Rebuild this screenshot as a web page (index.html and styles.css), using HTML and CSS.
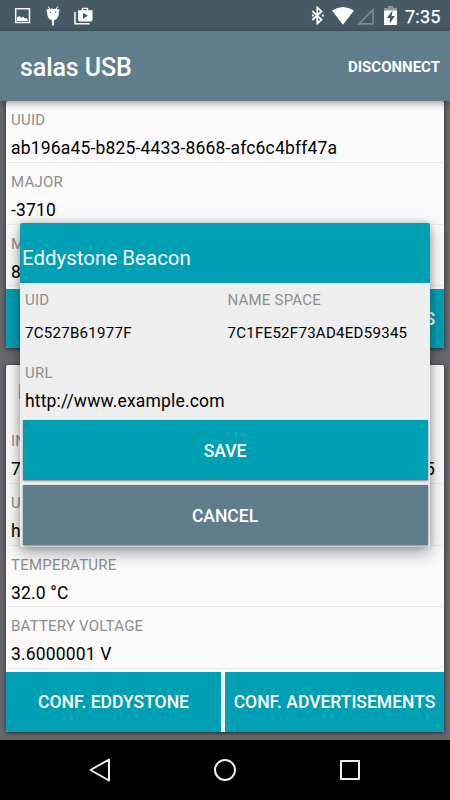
FILE: index.html
```html
<!DOCTYPE html>
<html lang="en">
<head>
<meta charset="utf-8">
<title>salas USB</title>
<link rel="stylesheet" href="styles.css">
</head>
<body>
<div class="screen">
  <header class="status">
    <div class="notices">
      <svg class="i-image" width="16" height="16" viewBox="0 0 16 16"><rect x=".7" y=".7" width="13.800" height="13.800" fill="none" stroke="#fff" stroke-width="1.400"/><path fill="#fff" d="M2 13V9.500l2.600-1.500 1.700 1.800 2-1 1.300 1.500 2.400.2 1.200 2.500z"/></svg>
      <svg class="i-droid" width="14" height="20" viewBox="0 0 14 20"><path d="M2.200 .5l2 3M11.800 .5l-2 3" stroke="#fff" stroke-width="1"/><path fill="#fff" d="M3.300 2.700h7.400c1.600.4 2.200 1 2.900.7-.1 1.500-.8 2.200-.8 3.600 0 4.300-2.400 7.400-5.800 7.400S1.200 11.300 1.200 7C1.200 5.500.5 4.900.4 3.400c.7.3 1.400-.3 2.900-.7z"/><path fill="#fff" d="M6.100 14h1.800v5.500H6.100z"/><circle cx="4.400" cy="6.200" r=".8" fill="#455a64"/><circle cx="9.600" cy="6.200" r=".8" fill="#455a64"/></svg>
      <svg class="i-store" width="19" height="18" viewBox="0 0 19 18"><path d="M1 5v11.800h14.500" fill="none" stroke="#fff" stroke-width="1.500"/><path fill="#fff" fill-rule="evenodd" d="M4 3.200h3.700V1.800Q7.700.8 8.700.8h4.600q1 0 1 1v1.400H18.500v9.300q0 2-2 2H6q-2 0-2-2zM9 2.200v1h4v-1zM9 5.800v6l4.800-3z"/></svg>
    </div>
    <div class="system">
      <svg class="i-bt" width="13" height="19" viewBox="0 0 13 19"><path d="M1.300 5l9.200 8.700L6.300 17.400V1.500l4.200 3.900L1.300 14" fill="none" stroke="#fff" stroke-width="1.800"/><path d="M1 8.600h2v1.800H1zM10.800 8.600h2v1.800h-2z" fill="#fff"/></svg>
      <svg class="i-wifi" width="22" height="18" viewBox="0 0 22 18"><path fill="#fff" d="M0 3.500Q11-3.500 22 3.500L11 17.700z"/></svg>
      <svg class="i-cell" width="17" height="17" viewBox="0 0 17 17"><path d="M1.800 15.900H16V1.800z" fill="none" stroke="#7c8b92" stroke-width="1.600"/></svg>
      <svg class="i-batt" width="13" height="19" viewBox="0 0 13 19"><path fill="#8b989e" d="M4 0h5v2h4v3H0V2h4z"/><path fill="#fff" d="M0 4.500h13V19H0z"/><path fill="#455a64" d="M8.500 4.500L2.800 12h3v5.500l5-7.500H7.700z"/></svg>
      <span class="clock">7:35</span>
    </div>
  </header>
  <div class="appbar"><h1>salas USB</h1><span class="action">DISCONNECT</span></div>
  <main class="content">
    <section class="card card-top">
      <div class="row"><div class="label">UUID</div><div class="value">ab196a45-b825-4433-8668-afc6c4bff47a</div></div>
      <div class="row"><div class="label">MAJOR</div><div class="value">-3710</div></div>
      <div class="row"><div class="label">MINOR</div><div class="value">8</div></div>
      <div class="buttons"><div class="btn wide">CONF. ADVERTISEMENTS</div></div>
    </section>
    <section class="card card-eddy">
      <div class="card-title">Eddystone</div>
      <div class="row"><div class="label">INSTANCE</div><div class="value split"><span>7C527B61977F</span><span>7C1FE52F73AD4ED59345</span></div></div>
      <div class="row"><div class="label">URL</div><div class="value">http://www.example.com</div></div>
      <div class="row"><div class="label">TEMPERATURE</div><div class="value">32.0 °C</div></div>
      <div class="row"><div class="label">BATTERY VOLTAGE</div><div class="value">3.6000001 V</div></div>
      <div class="buttons"><div class="btn">CONF. EDDYSTONE</div><div class="btn">CONF. ADVERTISEMENTS</div></div>
    </section>
  </main>
  <nav class="nav">
    <svg width="24" height="26" viewBox="0 0 24 26"><path d="M21 2.500v21L2.500 13z" fill="none" stroke="#eee" stroke-width="2" stroke-linejoin="round"/></svg>
    <svg width="24" height="24" viewBox="0 0 24 24"><circle cx="12" cy="12" r="10" fill="none" stroke="#eee" stroke-width="2"/></svg>
    <svg width="24" height="24" viewBox="0 0 24 24"><rect x="3" y="3" width="18" height="18" fill="none" stroke="#eee" stroke-width="2" stroke-linejoin="round"/></svg>
  </nav>
  <div class="dialog">
    <div class="dialog-title">Eddystone Beacon</div>
    <div class="fields">
      <div><div class="label">UID</div><div class="code">7C527B61977F</div></div>
      <div><div class="label">NAME SPACE</div><div class="code">7C1FE52F73AD4ED59345</div></div>
    </div>
    <div class="url"><div class="label">URL</div><div class="value">http://www.example.com</div></div>
    <div class="dialog-actions"><div class="btn save">SAVE</div><div class="btn cancel">CANCEL</div></div>
  </div>
</div>
</body>
</html>
```
FILE: styles.css
```css
* { box-sizing: border-box; }
body { margin: 0; font-family: Roboto, "Liberation Sans", sans-serif; }
svg { display: block; }
.screen { position: relative; width: 450px; height: 800px; overflow: hidden; display: flex; flex-direction: column; background: #66666c; }
.status { flex: none; height: 31px; background: #455a64; display: flex; justify-content: space-between; padding: 0 10px 0 15px; }
.notices, .system { display: flex; align-items: flex-start; }
.i-image { margin-top: 8px; }
.i-droid { margin: 6px 0 0 15px; }
.i-store { margin: 7px 0 0 14px; }
.i-bt { margin: 6px 8px 0 0; }
.i-wifi { margin: 7px 3px 0 0; }
.i-cell { margin: 8px 10px 0 0; }
.i-batt { margin: 6px 8px 0 0; }
.clock { width: 35px; color: #fff; font-size: 18px; line-height: 33px; letter-spacing: .2px; -webkit-text-stroke: .25px #fff; }
.appbar { flex: none; z-index: 1; height: 70px; padding: 2px 10px 0 20px; display: flex; align-items: center; justify-content: space-between; background: #607d8b; color: #fff; box-shadow: 0 2px 7px rgba(0,0,0,.4); }
h1 { margin: 0; font-size: 25px; font-weight: 500; letter-spacing: -.1px; }
.action { font-size: 15px; font-weight: 700; }
.content { flex: 1; padding: 0 6px; overflow: hidden; }
.card { background: #fafafa; border-radius: 2px; box-shadow: 0 1px 4px rgba(0,0,0,.6); overflow: hidden; }
.card-top { height: 247px; margin-bottom: 17px; }
.card-eddy { height: 367px; }
.row { height: 61.8px; margin: 0 1px 0 2px; padding: 9px 3px 0; border-bottom: 1px solid #e9e9e9; }
.label { color: #8e8e8e; font-size: 15px; line-height: 20px; letter-spacing: .22px; }
.value { color: #000; font-size: 17.500px; line-height: 24px; padding-top: 6px; white-space: nowrap; letter-spacing: .17px; }
.split { display: flex; justify-content: space-between; padding-right: 5px; }
.card-title { height: 57px; padding: 15px 12px 0; font-size: 20px; }
.buttons { display: flex; gap: 4px; height: 60px; margin-top: 2.500px; }
.btn { flex: 1 1 0; display: flex; align-items: center; justify-content: center; height: 60px; padding-top: 1px; background: #00a0b4; color: #fff; font-size: 17.500px; font-weight: 500; white-space: nowrap; }
.buttons .btn:first-child { flex: 0 0 215px; }
.buttons .wide:first-child { flex: 1; justify-content: flex-end; padding-right: 9px; }
.nav { flex: none; height: 60px; background: #000; display: flex; align-items: center; justify-content: center; gap: 101px; }
.dialog { position: absolute; z-index: 2; left: 20px; top: 223px; width: 410px; height: 324px; background: #eee; border-radius: 2px; overflow: hidden; box-shadow: 0 6px 16px rgba(0,0,0,.35), 0 0 6px rgba(0,0,0,.2); }
.dialog-title { height: 60px; padding: 9px 3px 0 2px; line-height: 52px; background: #00a0b4; color: #f5f5f5; font-size: 20.500px; }
.fields { display: grid; grid-template-columns: 202.500px 1fr; padding: 7px 5px 0; }
.code { font-size: 15px; line-height: 20px; padding-top: 13px; letter-spacing: .29px; }
.url { padding: 20px 5px 0; }
.dialog-actions { display: flex; flex-direction: column; gap: 5px; padding: 7px 2.500px 0; }
.dialog .btn { flex: none; padding-top: 2px; box-shadow: 0 1px 2px rgba(0,0,0,.45); }
.dialog .cancel { background: #607d8b; }
```
